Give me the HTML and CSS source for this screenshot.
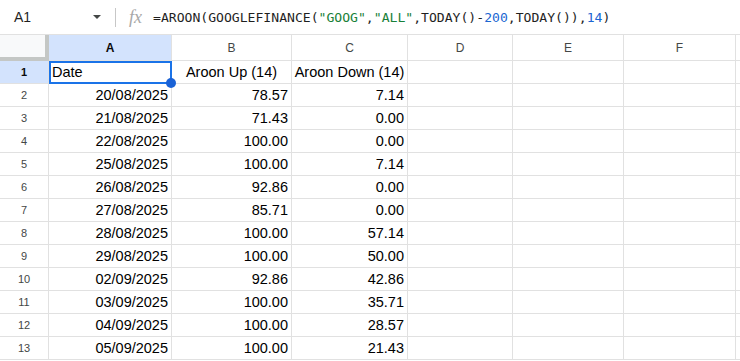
FILE: index.html
```html
<!DOCTYPE html>
<html>
<head>
<meta charset="utf-8">
<link rel="stylesheet" href="styles.css">
</head>
<body>
<div class="app">
  <div class="fbar">
    <div class="namebox"><span class="ref">A1</span><span class="caret"></span></div>
    <div class="sep"></div>
    <span class="fx">fx</span>
    <div class="formula">=AROON(GOOGLEFINANCE(<span class="str">"GOOG"</span>,<span class="str">"ALL"</span>,TODAY()-<span class="num">200</span>,TODAY()),<span class="num">14</span>)</div>
  </div>
  <div class="grid">
    <div class="corner"></div>
    <div class="ch sel">A</div><div class="ch">B</div><div class="ch">C</div><div class="ch">D</div><div class="ch">E</div><div class="ch">F</div><div class="ch"></div>

    <div class="rh sel">1</div><div class="c l active">Date</div><div class="c m">Aroon Up (14)</div><div class="c m">Aroon Down (14)</div><div class="c"></div><div class="c"></div><div class="c"></div><div class="c"></div>
    <div class="rh">2</div><div class="c r">20/08/2025</div><div class="c r">78.57</div><div class="c r">7.14</div><div class="c"></div><div class="c"></div><div class="c"></div><div class="c"></div>
    <div class="rh">3</div><div class="c r">21/08/2025</div><div class="c r">71.43</div><div class="c r">0.00</div><div class="c"></div><div class="c"></div><div class="c"></div><div class="c"></div>
    <div class="rh">4</div><div class="c r">22/08/2025</div><div class="c r">100.00</div><div class="c r">0.00</div><div class="c"></div><div class="c"></div><div class="c"></div><div class="c"></div>
    <div class="rh">5</div><div class="c r">25/08/2025</div><div class="c r">100.00</div><div class="c r">7.14</div><div class="c"></div><div class="c"></div><div class="c"></div><div class="c"></div>
    <div class="rh">6</div><div class="c r">26/08/2025</div><div class="c r">92.86</div><div class="c r">0.00</div><div class="c"></div><div class="c"></div><div class="c"></div><div class="c"></div>
    <div class="rh">7</div><div class="c r">27/08/2025</div><div class="c r">85.71</div><div class="c r">0.00</div><div class="c"></div><div class="c"></div><div class="c"></div><div class="c"></div>
    <div class="rh">8</div><div class="c r">28/08/2025</div><div class="c r">100.00</div><div class="c r">57.14</div><div class="c"></div><div class="c"></div><div class="c"></div><div class="c"></div>
    <div class="rh">9</div><div class="c r">29/08/2025</div><div class="c r">100.00</div><div class="c r">50.00</div><div class="c"></div><div class="c"></div><div class="c"></div><div class="c"></div>
    <div class="rh">10</div><div class="c r">02/09/2025</div><div class="c r">92.86</div><div class="c r">42.86</div><div class="c"></div><div class="c"></div><div class="c"></div><div class="c"></div>
    <div class="rh">11</div><div class="c r">03/09/2025</div><div class="c r">100.00</div><div class="c r">35.71</div><div class="c"></div><div class="c"></div><div class="c"></div><div class="c"></div>
    <div class="rh">12</div><div class="c r">04/09/2025</div><div class="c r">100.00</div><div class="c r">28.57</div><div class="c"></div><div class="c"></div><div class="c"></div><div class="c"></div>
    <div class="rh">13</div><div class="c r">05/09/2025</div><div class="c r">100.00</div><div class="c r">21.43</div><div class="c"></div><div class="c"></div><div class="c"></div><div class="c"></div>
  </div>
</div>
</body>
</html>
```
FILE: styles.css
```css
* { box-sizing: border-box; }
html, body { margin: 0; padding: 0; background: #fff; }
body { font-family: "Liberation Sans", Arial, sans-serif; color: #000; overflow: hidden; }
.app { width: 740px; height: 361px; overflow: hidden; }

.fbar {
  height: 35px;
  display: flex;
  align-items: center;
  border-bottom: 1px solid #e1e1e1;
  background: #fff;
}
.namebox {
  width: 108px;
  display: flex;
  align-items: center;
  justify-content: space-between;
  padding-left: 14px;
  padding-right: 7px;
}
.ref { font-size: 14px; color: #1f1f1f; }
.caret {
  width: 0; height: 0;
  border-left: 4px solid transparent;
  border-right: 4px solid transparent;
  border-top: 4px solid #444746;
}
.sep { width: 1px; height: 19px; background: #c7c7c7; margin-left: 7px; }
.fx {
  font-family: "Liberation Serif", "DejaVu Serif", serif;
  font-style: italic;
  font-size: 18px;
  color: #a8a8a8;
  margin-left: 13px;
  width: 16px;
  line-height: 18px;
}
.formula {
  margin-left: 8px;
  font-family: "DejaVu Sans Mono", "Liberation Mono", monospace;
  font-size: 13.1px;
  color: #1f1f1f;
  white-space: nowrap;
}
.str { color: #188038; }
.num { color: #1a66d2; }

.grid {
  display: grid;
  grid-template-columns: 49px 123px 120px 116px 105px 111px 112px 1fr;
  grid-template-rows: 26px repeat(13, 23px);
}
.corner {
  background: #f8f9fa;
  border-right: 4px solid #c4c7c5;
  border-bottom: 4px solid #c4c7c5;
}
.ch, .rh, .c {
  border-right: 1px solid #e1e1e1;
  border-bottom: 1px solid #e1e1e1;
  display: flex;
  align-items: center;
  white-space: nowrap;
  overflow: visible;
}
.ch {
  justify-content: center;
  font-size: 12px;
  color: #444746;
  background: #fff;
}
.rh {
  justify-content: center;
  font-size: 11px;
  color: #444746;
  background: #fff;
}
.ch.sel, .rh.sel {
  background: #d3e3fd;
  color: #0a0a0a;
  font-weight: bold;
}
.c {
  font-size: 14.5px;
  padding: 0 3px;
}
.c.r { justify-content: flex-end; }
.c.l { justify-content: flex-start; }
.c.m { justify-content: center; padding: 0; }
.active { position: relative; }
.active::before {
  content: "";
  position: absolute;
  left: 0; top: 0; right: -1px; bottom: -1px;
  border: 2px solid #1a73e8;
}
.active::after {
  content: "";
  position: absolute;
  width: 10px; height: 10px;
  border-radius: 50%;
  background: #1a62d6;
  right: -5px; bottom: -5px;
}
```
